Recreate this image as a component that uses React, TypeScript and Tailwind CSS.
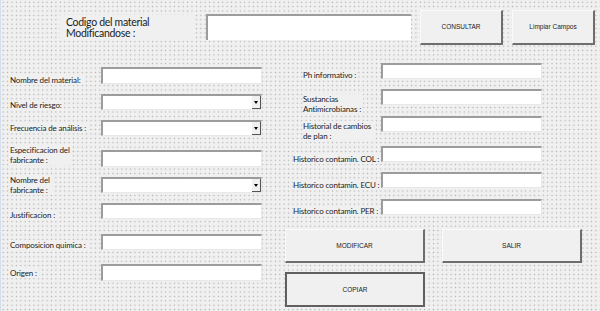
import React from "react";

const lbl = "font-['Lato','Liberation_Sans',sans-serif] text-[8px] leading-[10px] tracking-[-0.15px] text-[#222] whitespace-nowrap";

function TextBox({ combo = false, h = "h-[17px]" }: { combo?: boolean; h?: string }) {
  return (
    <div className={`relative w-[161px] ${h} bg-white border-t-2 border-l-2 border-t-[#9c9c9c] border-l-[#9c9c9c] border-b border-r border-b-[#e8e8e8] border-r-[#e8e8e8] shrink-0`}>
      {combo && (
        <div className="absolute right-0 top-0 bottom-0 w-[9px] bg-[#f0f0f0] border-r border-b border-r-[#555] border-b-[#555] flex items-center justify-center">
          <div className="w-0 h-0 border-l-[2.5px] border-r-[2.5px] border-t-[3px] border-l-transparent border-r-transparent border-t-black" />
        </div>
      )}
    </div>
  );
}

function Row({ label, mt, combo, pl = "pl-0", h = "h-[17px]", shift = "", lw = "w-[91px]" }: { label: React.ReactNode; mt: string; combo?: boolean; pl?: string; h?: string; shift?: string; lw?: string }) {
  return (
    <div className={`flex items-center ${h} ${mt}`}>
      <div className={`${lw} shrink-0 ${pl} ${shift}`}>
        <span className={`${lbl} bg-[#f0f0f0] inline-block pr-[2px]`}>{label}</span>
      </div>
      <TextBox combo={combo} h={h} />
    </div>
  );
}

function Btn({ children, w, h, mt = "", bold = false }: { children: React.ReactNode; w: string; h: string; mt?: string; bold?: boolean }) {
  return (
    <div
      className={`${w} ${h} ${mt} shrink-0 bg-[#f0f0f0] flex items-center justify-center font-['Liberation_Sans',sans-serif] text-[6.5px] text-[#222] ${
        bold
          ? "border-2 border-[#606060]"
          : "border-t border-l border-t-[#fafafa] border-l-[#fafafa] border-b-2 border-r-2 border-b-[#6e6e6e] border-r-[#6e6e6e]"
      }`}
    >
      {children}
    </div>
  );
}

export default function App() {
  return (
    <div className="w-[600px] h-[311px] overflow-hidden bg-[#f0f0f0] bg-[radial-gradient(circle,#b0b0b0_0.5px,transparent_1px)] bg-size-[4.4px_4.4px] pt-[10px] border-l border-l-[#d4deec]">
      {/* top row */}
      <div className="flex h-[35px]">
        <div className="ml-[59px] mt-[5px] w-[135px] h-[25px] bg-[#f0f0f0] pl-[6px] flex flex-col justify-center font-['Lato','Liberation_Sans',sans-serif] text-[10.5px] leading-[11px] tracking-[-0.3px] text-[#222]">
          <span>Codigo del material</span>
          <span>Modificandose :</span>
        </div>
        <div className="ml-[11px] mt-[4px] w-[205px] h-[26px] bg-white border-t-2 border-l-2 border-t-[#9c9c9c] border-l-[#9c9c9c]" />
        <Btn w="w-[83px] ml-[9px]" h="h-[35px]">CONSULTAR</Btn>
        <Btn w="w-[83px] ml-[9px]" h="h-[35px]">Limpiar Campos</Btn>
      </div>

      <div className="flex">
        {/* left column */}
        <div className="ml-[9px] flex flex-col w-[252px]">
          <Row label="Nombre del material:" mt="mt-[22px]" shift="translate-y-[1px]" />
          <Row label="Nivel de riesgo:" mt="mt-[10px]" combo h="h-[16px]" />
          <Row label="Frecuencia de análisis :" mt="mt-[10px]" combo h="h-[16px]" shift="-translate-y-[3px]" />
          <Row label={<>Especificacion del<br />fabricante :</>} mt="mt-[14px]" shift="-translate-y-[2px]" />
          <Row label={<>Nombre del<br />fabricante :</>} mt="mt-[10px]" combo h="h-[16px]" shift="translate-y-[2px]" />
          <Row label="Justificacion :" mt="mt-[10px]" h="h-[16px]" shift="translate-y-[1px]" />
          <Row label="Composicion quimica :" mt="mt-[15px]" h="h-[16px]" />
          <Row label="Origen :" mt="mt-[14px]" shift="-translate-y-[3px]" />
        </div>

        {/* right column */}
        <div className="ml-[23px] flex flex-col">
          <Row label="Ph informativo :" mt="mt-[18px]" lw="w-[96px]" pl="pl-[18px]" h="h-[16px]" shift="translate-y-[1px]" />
          <Row label={<>Sustancias<br />Antimicrobianas :</>} mt="mt-[10px]" lw="w-[96px]" pl="pl-[18px]" h="h-[16px]" shift="translate-y-[9px]" />
          <Row label={<>Historial de cambios<br />de plan :</>} mt="mt-[11px]" lw="w-[96px]" pl="pl-[18px]" h="h-[16px]" shift="translate-y-[9px]" />
          <Row label="Historico contamin. COL :" mt="mt-[14px]" lw="w-[96px]" pl="pl-[8px]" h="h-[16px]" shift="translate-y-[2px]" />
          <Row label="Historico contamin. ECU :" mt="mt-[10px]" lw="w-[96px]" pl="pl-[8px]" h="h-[16px]" shift="translate-y-[2px]" />
          <Row label="Historico contamin. PER :" mt="mt-[11px]" lw="w-[96px]" pl="pl-[8px]" h="h-[16px]" shift="translate-y-[1px]" />
          <div className="flex mt-[14px]">
            <Btn w="w-[140px]" h="h-[34px]">MODIFICAR</Btn>
            <Btn w="w-[140px] ml-[17px]" h="h-[34px]">SALIR</Btn>
          </div>
          <Btn w="w-[140px]" h="h-[35px]" mt="mt-[9px]" bold>COPIAR</Btn>
        </div>
      </div>
    </div>
  );
}
